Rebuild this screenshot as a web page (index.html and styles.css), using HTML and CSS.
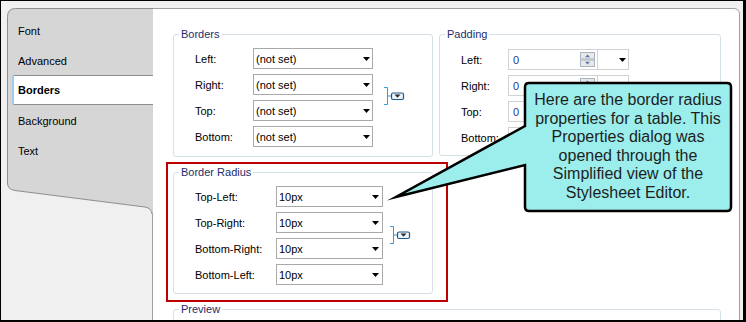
FILE: index.html
```html
<!DOCTYPE html>
<html>
<head>
<meta charset="utf-8">
<link rel="stylesheet" href="styles.css">
</head>
<body>
<div class="frame">
  <div class="tabs">
    <svg class="tabs-bg" width="146" height="210" viewBox="0 0 146 210">
      <path class="tabs-fill" d="M0.5,8.5 Q0.5,0.5 8.5,0.5 H146 V207 Q145,200 138,199 L8,182.5 Q0.5,181.5 0.5,175 Z"/>
      <path class="tabs-line" d="M145,206 Q144.5,200 138,199 L8,182.5 Q0.5,181.5 0.5,175 V8.5 Q0.5,0.5 8.5,0.5 H146"/>
    </svg>
    <ul class="tab-list">
      <li class="tab">Font</li>
      <li class="tab">Advanced</li>
      <li class="tab active">Borders</li>
      <li class="tab">Background</li>
      <li class="tab">Text</li>
    </ul>
  </div>

  <div class="content">
    <div class="top-row">
      <fieldset class="group borders">
        <legend>Borders</legend>
        <div class="linked">
          <div class="form-grid grid-borders">
            <span class="lbl">Left:</span><div class="select"><span class="val">(not set)</span><svg class="caret" viewBox="0 0 7 4"><path d="M0 0H7L3.5 4Z"/></svg></div>
            <span class="lbl">Right:</span><div class="select"><span class="val">(not set)</span><svg class="caret" viewBox="0 0 7 4"><path d="M0 0H7L3.5 4Z"/></svg></div>
            <span class="lbl">Top:</span><div class="select"><span class="val">(not set)</span><svg class="caret" viewBox="0 0 7 4"><path d="M0 0H7L3.5 4Z"/></svg></div>
            <span class="lbl">Bottom:</span><div class="select"><span class="val">(not set)</span><svg class="caret" viewBox="0 0 7 4"><path d="M0 0H7L3.5 4Z"/></svg></div>
          </div>
          <svg class="link-icon link-borders" width="20" height="20" viewBox="0 0 20 20">
            <path class="bracket" d="M0,1.5 H3.5 V18.5 H0 M3.5,10 H7.5"/>
            <rect class="link-btn" x="7.5" y="7" width="12" height="6.5" rx="1.5"/>
            <path class="link-tri" d="M10.5,8.6 H16.5 L13.5,11.8 Z"/>
          </svg>
        </div>
      </fieldset>

      <fieldset class="group padding">
        <legend>Padding</legend>
        <div class="form-grid grid-padding">
          <span class="lbl">Left:</span>
          <div class="spin-input"><div class="spin-field"><span class="num">0</span><svg class="spinner" width="15" height="15" viewBox="0 0 15 15"><rect x="0.5" y="0.5" width="14" height="6.5"/><rect x="0.5" y="8" width="14" height="6.5"/><path d="M5,5.2 H10 L7.5,2.4 Z M5,9.8 H10 L7.5,12.6 Z"/></svg></div><div class="spin-drop"><svg class="caret" viewBox="0 0 7 4"><path d="M0 0H7L3.5 4Z"/></svg></div></div>
          <span class="lbl">Right:</span>
          <div class="spin-input"><div class="spin-field"><span class="num">0</span><svg class="spinner" width="15" height="15" viewBox="0 0 15 15"><rect x="0.5" y="0.5" width="14" height="6.5"/><rect x="0.5" y="8" width="14" height="6.5"/><path d="M5,5.2 H10 L7.5,2.4 Z M5,9.8 H10 L7.5,12.6 Z"/></svg></div><div class="spin-drop"><svg class="caret" viewBox="0 0 7 4"><path d="M0 0H7L3.5 4Z"/></svg></div></div>
          <span class="lbl">Top:</span>
          <div class="spin-input"><div class="spin-field"><span class="num">0</span><svg class="spinner" width="15" height="15" viewBox="0 0 15 15"><rect x="0.5" y="0.5" width="14" height="6.5"/><rect x="0.5" y="8" width="14" height="6.5"/><path d="M5,5.2 H10 L7.5,2.4 Z M5,9.8 H10 L7.5,12.6 Z"/></svg></div><div class="spin-drop"><svg class="caret" viewBox="0 0 7 4"><path d="M0 0H7L3.5 4Z"/></svg></div></div>
          <span class="lbl">Bottom:</span>
          <div class="spin-input"><div class="spin-field"><span class="num">0</span><svg class="spinner" width="15" height="15" viewBox="0 0 15 15"><rect x="0.5" y="0.5" width="14" height="6.5"/><rect x="0.5" y="8" width="14" height="6.5"/><path d="M5,5.2 H10 L7.5,2.4 Z M5,9.8 H10 L7.5,12.6 Z"/></svg></div><div class="spin-drop"><svg class="caret" viewBox="0 0 7 4"><path d="M0 0H7L3.5 4Z"/></svg></div></div>
        </div>
      </fieldset>
    </div>

    <div class="highlight">
      <fieldset class="group radius">
        <legend>Border Radius</legend>
        <div class="linked">
          <div class="form-grid grid-radius">
            <span class="lbl">Top-Left:</span><div class="select"><span class="val">10px</span><svg class="caret" viewBox="0 0 7 4"><path d="M0 0H7L3.5 4Z"/></svg></div>
            <span class="lbl">Top-Right:</span><div class="select"><span class="val">10px</span><svg class="caret" viewBox="0 0 7 4"><path d="M0 0H7L3.5 4Z"/></svg></div>
            <span class="lbl">Bottom-Right:</span><div class="select"><span class="val">10px</span><svg class="caret" viewBox="0 0 7 4"><path d="M0 0H7L3.5 4Z"/></svg></div>
            <span class="lbl">Bottom-Left:</span><div class="select"><span class="val">10px</span><svg class="caret" viewBox="0 0 7 4"><path d="M0 0H7L3.5 4Z"/></svg></div>
          </div>
          <svg class="link-icon link-radius" width="20" height="20" viewBox="0 0 20 20">
            <path class="bracket" d="M0,1.5 H3.5 V18.5 H0 M3.5,10 H7.5"/>
            <rect class="link-btn" x="7.5" y="7" width="12" height="6.5" rx="1.5"/>
            <path class="link-tri" d="M10.5,8.6 H16.5 L13.5,11.8 Z"/>
          </svg>
        </div>
      </fieldset>
    </div>

    <fieldset class="group preview">
      <legend>Preview</legend>
      <div class="preview-body"></div>
    </fieldset>
  </div>

  <svg class="callout-shape" width="746" height="322" viewBox="0 0 746 322">
    <path d="M529,83 H727 Q731,83 731,87 V207 Q731,211 727,211 H529 Q525,211 525,207 V165 L396,197 L525,126 V87 Q525,83 529,83 Z"/>
  </svg>
  <div class="callout-text">Here are the border radius<br>properties for a table. This<br>Properties dialog was<br>opened through the<br>Simplified view of the<br>Stylesheet Editor.</div>
</div>
</body>
</html>
```

FILE: styles.css
```css
* { box-sizing: border-box; }

html, body {
  margin: 0;
  padding: 0;
  background: #f0f0f0;
}

body {
  font-family: "Liberation Sans", Arial, sans-serif;
  font-size: 11px;
  color: #000;
}

.frame {
  position: relative;
  width: 746px;
  height: 322px;
  border-style: solid;
  border-color: #000;
  border-width: 1px 3px 2px 1px;
  background: #f0f0f0;
  padding: 7px 0 0 6px;
  display: flex;
  align-items: flex-start;
  overflow: hidden;
}

/* ---------- tabs ---------- */
.tabs {
  position: relative;
  width: 145px;
  flex: none;
  height: 215px;
}

.tabs-bg {
  position: absolute;
  left: 0;
  top: 0;
}

.tabs-fill { fill: #d6d6d6; }
.tabs-line { fill: none; stroke: #8e8e8e; stroke-width: 1; }

.tab-list {
  position: relative;
  list-style: none;
  margin: 0;
  padding: 8px 0 0 0;
}

.tab {
  height: 30px;
  line-height: 30px;
  padding-left: 11px;
  white-space: nowrap;
}

.tab.active {
  position: relative;
  z-index: 2;
  margin: -1px -1px 1px 5px;
  padding-left: 4px;
  background: #fff;
  border: 1px solid #8e8e8e;
  border-left: 2px solid #9fcbf3;
  border-right: none;
  border-radius: 2px 0 0 2px;
  line-height: 28px;
  font-weight: bold;
}

/* ---------- content ---------- */
.content {
  flex: none;
  width: 588px;
  height: 340px;
  background: #fff;
  border: 1px solid #a0a0a0;
  border-top-right-radius: 6px;
  padding: 19px 18px 0 20px;
}

.top-row {
  display: flex;
  gap: 6px;
  align-items: flex-start;
}

.group {
  margin: 0;
  min-width: 0;
  border: 1px solid #d5dfe6;
  border-radius: 3px;
  padding: 7px 0 9px 5px;
}

.group legend {
  padding: 0 2px;
  margin-left: 0;
  font-size: 11px;
  line-height: 13px;
  color: #1d2d6b;
}

.borders { width: 260px; }
.padding { width: 282px; padding-top: 8px; padding-bottom: 7px; }
.radius { width: 260px; padding-bottom: 8px; }

.linked {
  display: flex;
  align-items: center;
}

.form-grid {
  display: grid;
  grid-auto-rows: 21px;
  row-gap: 5px;
  align-items: center;
  padding-left: 16px;
}

.grid-borders { grid-template-columns: 58px 120px; }
.grid-radius { grid-template-columns: 81px 107px; }
.grid-padding { grid-template-columns: 47px 121px; }

.lbl { white-space: nowrap; }

.select {
  height: 21px;
  border: 1px solid #a9a9a9;
  background: #fff;
  display: flex;
  align-items: center;
  padding: 0 2px 0 2px;
}

.val {
  flex: 1;
  white-space: nowrap;
}

.caret {
  width: 7px;
  height: 4px;
  flex: none;
  fill: #000;
}

.grid-radius .select { padding-right: 3px; }

.link-icon {
  flex: none;
  overflow: visible;
}
.link-borders { margin: 0 0 3px 11px; }
.link-radius { margin: 0 0 2px 7px; }

.bracket { fill: none; stroke: #3a9ad9; stroke-width: 1; }
.link-btn { fill: #eef4fa; stroke: #1d5a8c; stroke-width: 1.2; }
.link-tri { fill: #2b2b2b; }

/* padding inputs */
.spin-input {
  height: 21px;
  border: 1px solid #d2d2d2;
  display: flex;
  background: #fff;
}

.spin-field {
  width: 88px;
  display: flex;
  align-items: center;
  padding: 0 2px 0 4px;
}

.num {
  flex: 1;
  color: #1f3a8c;
}

.spinner rect {
  fill: #e8e8e8;
  stroke: #a9b3c2;
  stroke-width: 1;
}
.spinner path { fill: #5a76ad; }

.spin-drop {
  flex: 1;
  border-left: 1px solid #d2d2d2;
  display: flex;
  align-items: center;
  justify-content: flex-end;
  padding-right: 2px;
}

/* highlight */
.highlight {
  width: 282px;
  margin: 5px 0 0 -7px;
  border: 2px solid #bf0000;
  padding: 2px 13px 6px 5px;
}

.preview {
  width: 548px;
  margin-top: 1px;
}

.preview-body { height: 40px; }

/* ---------- callout ---------- */
.callout-shape {
  position: absolute;
  left: -1px;
  top: -1px;
  pointer-events: none;
}

.callout-shape path {
  fill: #9beeec;
  stroke: #000;
  stroke-width: 2.5;
  stroke-linejoin: miter;
  stroke-miterlimit: 12;
}

.callout-text {
  position: absolute;
  left: 523px;
  top: 81px;
  width: 208px;
  height: 130px;
  padding-top: 9px;
  text-align: center;
  font-family: "Liberation Sans", Arial, sans-serif;
  font-size: 16px;
  line-height: 18.6px;
  color: #1e1e1e;
}
```
